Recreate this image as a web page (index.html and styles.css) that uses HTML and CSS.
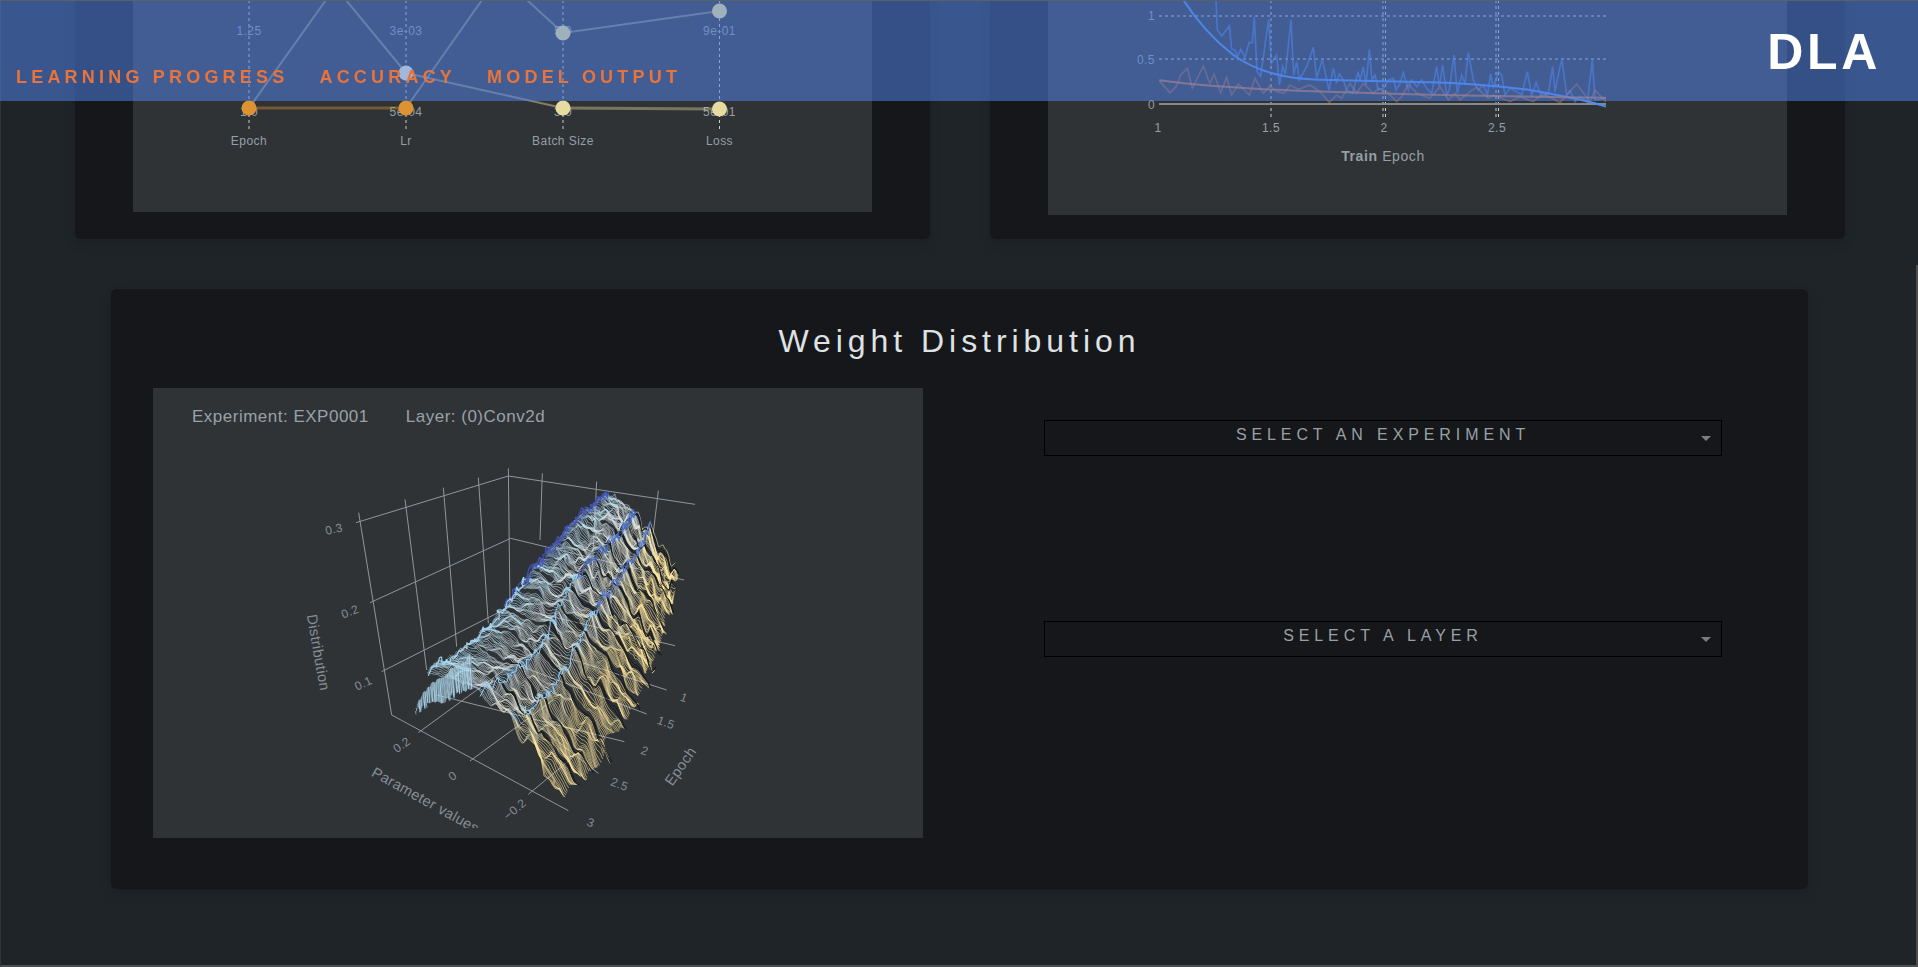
FILE: index.html
```html
<!DOCTYPE html>
<html lang="en">
<head>
<meta charset="utf-8">
<title>DLA</title>
<link rel="stylesheet" href="styles.css">
</head>
<body>
<header class="nav">
  <nav class="nav-links">
    <a class="nav-link" href="#progress">LEARNING PROGRESS</a>
    <a class="nav-link" href="#accuracy">ACCURACY</a>
    <a class="nav-link" href="#output">MODEL OUTPUT</a>
  </nav>
  <div class="brand">DLA</div>
</header>
<div class="scroll-thumb"></div>
<main class="page">
  <section class="top-row">
    <div class="card card-top">
      <div class="plot plot-parallel">
        <svg class="chart" viewBox="133 0 739 212" width="739" height="212">
          <g class="axis-dash">
            <line x1="249" y1="0" x2="249" y2="129"/>
            <line x1="406" y1="0" x2="406" y2="129"/>
            <line x1="563" y1="0" x2="563" y2="129"/>
            <line x1="719.5" y1="0" x2="719.5" y2="129"/>
          </g>
          <g class="tick" text-anchor="middle">
            <text x="249" y="35">1.25</text>
            <text x="406" y="35">3e-03</text>
            <text x="563" y="35">5.0</text>
            <text x="719.5" y="35">9e-01</text>
            <text x="249" y="116">1.0</text>
            <text x="406" y="116">5e-04</text>
            <text x="563" y="116">3.0</text>
            <text x="719.5" y="116">5e-01</text>
          </g>
          <g class="tick" text-anchor="middle">
            <text x="249" y="145">Epoch</text>
            <text x="406" y="145">Lr</text>
            <text x="563" y="145">Batch Size</text>
            <text x="719.5" y="145">Loss</text>
          </g>
          <g class="trace-grey">
            <polyline points="249,108 326,0"/>
            <polyline points="346,0 406,73 563,108"/>
            <polyline points="406,108 482,0"/>
            <polyline points="527,0 563,33 719.5,11"/>
          </g>
          <polyline class="trace-orange" points="249,108 406,108"/>
          <polyline class="trace-olive" points="563,108 719.5,109"/>
          <circle class="pt-orange" cx="249" cy="108" r="7.5"/>
          <circle class="pt-orange" cx="406" cy="108" r="7.5"/>
          <circle class="pt-yellow" cx="563" cy="108" r="7.5"/>
          <circle class="pt-yellow" cx="719.5" cy="109" r="7.5"/>
          <circle class="pt-blue" cx="406" cy="73" r="7.5"/>
          <circle class="pt-pale" cx="563" cy="33" r="7.5"/>
          <circle class="pt-pale" cx="719.5" cy="11" r="7.5"/>
        </svg>
      </div>
    </div>
    <div class="card card-top">
      <div class="plot plot-loss">
        <svg class="chart" viewBox="1048 0 739 215" width="739" height="215">
          <g class="grid-dash">
            <line x1="1159" y1="16" x2="1606" y2="16"/>
            <line x1="1159" y1="59" x2="1606" y2="59"/>
            <line x1="1271" y1="0" x2="1271" y2="118"/>
            <line x1="1383" y1="0" x2="1383" y2="118"/>
            <line x1="1385.5" y1="0" x2="1385.5" y2="118"/>
            <line x1="1496" y1="0" x2="1496" y2="118"/>
            <line x1="1498.5" y1="0" x2="1498.5" y2="118"/>
          </g>
          <line class="zero-line" x1="1159" y1="104" x2="1606" y2="104"/>
          <g class="tick" text-anchor="end">
            <text x="1155" y="20">1</text>
            <text x="1155" y="64">0.5</text>
            <text x="1155" y="109">0</text>
          </g>
          <g class="tick" text-anchor="middle">
            <text x="1158" y="132">1</text>
            <text x="1271" y="132">1.5</text>
            <text x="1384" y="132">2</text>
            <text x="1497" y="132">2.5</text>
          </g>
          <text class="axis-title" x="1383" y="161" text-anchor="middle"><tspan class="axis-title-strong">Train</tspan> Epoch</text>
          <g transform="translate(1130 0) scale(.33333)">
            <polyline class="noisy-blue" points="258,0 262,90 275,108 298,78 305,148 315,150 322,170 332,148 345,172 357,128 367,128 373,50 381,215 392,228 416,58 424,190 440,165 448,255 458,200 466,222 483,60 491,225 500,185 508,240 530,200 550,142 560,235 577,178 597,270 610,205 620,250 628,222 640,240 650,270 668,280 684,215 690,240 700,202 708,255 718,148 726,240 735,225 745,270 760,265 775,240 790,235 798,270 810,250 820,218 835,270 845,240 860,260 875,240 890,265 905,280 920,200 928,260 938,195 950,285 958,270 972,165 982,280 995,225 1005,250 1015,158 1030,240 1045,270 1060,255 1072,285 1082,222 1090,265 1105,215 1115,225 1125,285 1140,265 1160,275 1175,285 1192,215 1205,285 1218,248 1235,290 1255,280 1268,200 1275,275 1290,200 1296,180 1310,285 1320,272 1335,305 1350,290 1372,305 1387,180 1395,300 1428,295"/>
            <polyline class="noisy-orange" points="88,242 120,278 140,258 152,225 172,205 187,265 220,198 240,252 252,222 272,278 290,232 305,285 325,252 358,285 375,235 400,280 420,258 440,275 462,280 480,255 505,268 540,255 570,275 598,307 620,285 635,295 660,250 680,280 700,250 730,280 745,265 770,275 800,305 815,290 835,252 860,280 900,295 930,260 955,300 975,280 990,300 1020,275 1040,262 1075,295 1090,285 1140,305 1170,290 1210,305 1240,280 1290,308 1340,252 1380,305 1395,270 1428,305"/>
            <path class="smooth-blue" d="M160 0C200 62 250 118 310 165C370 208 440 232 540 238C620 242 760 243 900 247C1000 249 1100 258 1200 270C1300 288 1370 300 1428 320"/>
            <path class="smooth-orange" d="M88 241C200 256 330 266 500 272C760 281 1000 288 1428 293"/>
          </g>
        </svg>
      </div>
    </div>
  </section>

  <section class="card card-main">
    <h1 class="title">Weight Distribution</h1>
    <div class="main-body">
      <div class="plot plot-surface">
        <div class="surface-info">
          <span>Experiment: EXP0001</span>
          <span>Layer: (0)Conv2d</span>
        </div>
        <svg class="surface-svg" viewBox="153 388 770 440" width="770" height="440">
          <g transform="translate(280 450) scale(.33333)">
            <g class="frame">
              <path d="M236 188L335 795L865 1082"/>
              <path d="M228 218L685 78L1245 163"/>
              <path d="M685 55L690 470"/>
              <path d="M375 148L440 660M490 113L530 590M595 83L625 520"/>
              <path d="M270 458L692 265L1212 390"/>
              <path d="M305 665L690 470L1185 587"/>
              <path d="M787 70L780 270M950 95L935 390M1135 122L1115 290"/>
              <path d="M415 848L700 640M570 933L820 750M745 1033L905 900"/>
              <path d="M470 735L1033 875M600 690L955 970M700 640L1100 792M820 610L1160 720"/>
            </g>
            <g id="surface"></g>
            <g class="surface-tick" text-anchor="middle">
              <text x="162" y="250" transform="rotate(-12 162 238)">0.3</text>
              <text x="210" y="497" transform="rotate(-22 210 485)">0.2</text>
              <text x="250" y="712" transform="rotate(-25 250 700)">0.1</text>
              <text x="365" y="897" transform="rotate(-35 365 885)">0.2</text>
              <text x="518" y="990" transform="rotate(-35 518 978)">0</text>
              <text x="705" y="1090" transform="rotate(-40 705 1078)">−0.2</text>
              <text x="1212" y="755" transform="rotate(20 1212 743)">1</text>
              <text x="1158" y="830" transform="rotate(20 1158 818)">1.5</text>
              <text x="1094" y="915" transform="rotate(20 1094 903)">2</text>
              <text x="1018" y="1015" transform="rotate(20 1018 1003)">2.5</text>
              <text x="932" y="1130" transform="rotate(20 932 1118)">3</text>
            </g>
            <g class="surface-name" text-anchor="middle">
              <text x="112" y="620" transform="rotate(80 112 608)">Distribution</text>
              <text x="1204" y="962" transform="rotate(-55 1204 950)">Epoch</text>
              <text x="278" y="978" text-anchor="start" transform="rotate(29 278 965)">Parameter values</text>
            </g>
          </g>
        </svg>
      </div>
      <div class="controls">
        <div class="select"><span class="select-label">SELECT AN EXPERIMENT</span><span class="caret"></span></div>
        <div class="select select-second"><span class="select-label">SELECT A LAYER</span><span class="caret"></span></div>
      </div>
    </div>
  </section>
</main>
<script src="script.js"></script>
</body>
</html>
```

FILE: styles.css
```css
* { box-sizing: border-box; }
html, body { margin: 0; padding: 0; }
body {
  height: 967px;
  overflow: hidden;
  background: #1e2428;
  color: #9aa1a7;
  font-family: "Liberation Sans", Arial, sans-serif;
  border-left: 1px solid #2f3538;
  border-bottom: 2px solid #4a4f52;
}
.nav {
  position: fixed;
  top: 0;
  left: 0;
  right: 0;
  height: 101px;
  z-index: 10;
  display: flex;
  justify-content: space-between;
  background: rgba(80, 128, 226, .55);
  border-top: 1px solid #5a6068;
}
.nav-links {
  display: flex;
  align-items: flex-end;
  gap: 31px;
  padding: 0 0 12px 16px;
}
.nav-link {
  color: #e8743b;
  font-size: 18px;
  font-weight: 700;
  line-height: 24px;
  letter-spacing: 4.2px;
  text-decoration: none;
  white-space: nowrap;
}
.brand {
  color: #fff;
  font-size: 50px;
  font-weight: 700;
  line-height: 60px;
  letter-spacing: 3.7px;
  padding: 21px 37px 0 0;
}
.scroll-thumb {
  position: fixed;
  top: 265px;
  right: 0;
  bottom: 0;
  width: 2px;
  background: #4d4d4d;
  z-index: 11;
}
.page { display: block; }
.top-row {
  display: flex;
  gap: 60px;
  padding-left: 74px;
}
.card {
  background: #15171a;
  border-radius: 6px;
  box-shadow: 0 4px 12px rgba(0, 0, 0, .14);
}
.card-top {
  width: 855px;
  height: 239px;
  padding: 0 58px;
  overflow: hidden;
  border-radius: 0 0 6px 6px;
}
.plot { background: #2f3336; }
.plot-parallel { height: 212px; }
.plot-loss { height: 215px; }
.chart { display: block; }
.axis-dash line { stroke: #c9cfd4; stroke-width: 1; stroke-dasharray: 3 3; }
.grid-dash line { stroke: #c9cfd4; stroke-width: 1; stroke-dasharray: 3 3; }
.tick text { font: 12px "Liberation Sans", Arial, sans-serif; letter-spacing: .45px; fill: #979fa6; }
.axis-title { font: 14px "Liberation Sans", Arial, sans-serif; letter-spacing: .6px; fill: #979fa6; }
.axis-title-strong { font-weight: 700; }
.trace-grey polyline { fill: none; stroke: #ecdcb0; stroke-width: 2; opacity: .45; }
.trace-orange { fill: none; stroke: #e0932e; stroke-width: 3; opacity: .4; }
.trace-olive { fill: none; stroke: #e6dca0; stroke-width: 3; opacity: .4; }
.pt-orange { fill: #dd9430; }
.pt-yellow { fill: #e6dca0; }
.pt-blue { fill: #fffcd2; }
.pt-pale { fill: #fff08c; }
.zero-line { stroke: #85898d; stroke-width: 2; }
.noisy-blue { fill: none; stroke: #4f8df5; stroke-width: 5; opacity: .6; }
.noisy-orange { fill: none; stroke: #f0803c; stroke-width: 5; opacity: .45; }
.smooth-blue { fill: none; stroke: #4f8df5; stroke-width: 6; }
.smooth-orange { fill: none; stroke: #f0803c; stroke-width: 6; opacity: .75; }

.card-main {
  width: 1697px;
  height: 600px;
  margin: 50px 0 0 110px;
  padding: 0 42px;
}
.title {
  margin: 0;
  height: 99px;
  padding-top: 34px;
  text-align: center;
  color: #dfe2e5;
  font-size: 32px;
  font-weight: 400;
  line-height: 37px;
  letter-spacing: 4.95px;
}
.main-body { display: flex; }
.plot-surface {
  width: 770px;
  height: 450px;
  flex: none;
  overflow: hidden;
}
.surface-info {
  display: flex;
  gap: 37px;
  height: 0;
  padding-left: 39px;
  font-size: 17px;
  line-height: 20px;
  letter-spacing: .5px;
  color: #9aa1a7;
  white-space: nowrap;
  transform: translateY(19px);
}
.surface-svg { display: block; }
.frame path { fill: none; stroke: #8f979e; stroke-width: 3; }
.surface-tick text { font: 36px "Liberation Sans", Arial, sans-serif; letter-spacing: 1px; fill: #858d94; }
.surface-name text { font: 44px "Liberation Sans", Arial, sans-serif; letter-spacing: 1px; fill: #858d94; }

.controls {
  width: 678px;
  margin-left: 121px;
  padding-top: 32px;
}
.select {
  position: relative;
  height: 36px;
  border: 1px solid #000;
  text-align: center;
  line-height: 28px;
  font-size: 16px;
  letter-spacing: 4.9px;
  color: #9aa0a6;
}
.select-second { margin-top: 165px; }
.caret {
  position: absolute;
  top: 15px;
  right: 10px;
  border-left: 5px solid transparent;
  border-right: 5px solid transparent;
  border-top: 5px solid #7a7d80;
}
```

FILE: script.js
```js
(function () {
  var seed = 1234567;
  function rnd() {
    seed = (seed + 0x6D2B79F5) | 0;
    var t = Math.imul(seed ^ (seed >>> 15), 1 | seed);
    t = (t + Math.imul(t ^ (t >>> 7), 61 | t)) ^ t;
    return ((t ^ (t >>> 14)) >>> 0) / 4294967296;
  }
  var table = [];
  for (var n = 0; n < 4096; n++) table.push(rnd());
  function lat(i, j) { return table[((i * 73 + j * 179) % 4096 + 4096) % 4096]; }
  function smooth(t) { return t * t * (3 - 2 * t); }
  function noise(x, y) {
    var i = Math.floor(x), j = Math.floor(y);
    var fx = smooth(x - i), fy = smooth(y - j);
    var a = lat(i, j), b = lat(i + 1, j), c = lat(i, j + 1), d = lat(i + 1, j + 1);
    return (a + (b - a) * fx) + ((c + (d - c) * fx) - (a + (b - a) * fx)) * fy - 0.5;
  }
  function sample(pts, u) {
    var p = Math.min(u, 0.9999) * (pts.length - 1);
    var k = Math.floor(p), f = p - k;
    return [pts[k][0] + (pts[k + 1][0] - pts[k][0]) * f, pts[k][1] + (pts[k + 1][1] - pts[k][1]) * f];
  }
  var START = [[440,665],[530,610],[620,530],[690,445],[750,360],[810,290],[870,215],[930,170],[980,125]];
  var END = [[865,1060],[950,975],[1050,835],[1120,710],[1150,610],[1185,480],[1195,390]];
  var buckets = {};
  function put(color, width, x1, y1, x2, y2) {
    var key = color + '|' + width;
    (buckets[key] = buckets[key] || []).push('M' + x1.toFixed(1) + ' ' + y1.toFixed(1) + 'L' + x2.toFixed(1) + ' ' + y2.toFixed(1));
  }
  function gauss(s, c, w) { var d = (s - c) / w; return Math.exp(-d * d); }
  function ridge2(u) { return 0.38 + 0.04 * Math.sin(u * 9); }
  function ridge3(u) { return 0.58 + 0.03 * Math.sin(u * 7 + 1); }
  function pointAt(u, s, frac) {
    var a = sample(START, u), b = sample(END, u);
    var x = a[0] + (b[0] - a[0]) * s;
    var y = a[1] + (b[1] - a[1]) * s;
    var bulge = Math.sin(Math.PI * Math.pow(s, 0.85)) * (88 - 50 * u);
    y -= bulge;
    y -= 16 * gauss(s, ridge2(u), 0.035) + 18 * gauss(s, ridge3(u), 0.03);
    var nAmp = 12 + 18 * s;
    y += noise(u * 45, s * 18) * nAmp * 2 + noise(u * 150, s * 46) * 9;
    x += noise(u * 90, s * 30 + 5) * 7;
    y += (frac - 0.5) * 12 * s;
    return [x, y];
  }
  function colorFor(u, s) {
    var top = u > 0.35 ? 0.03 : 0.012;
    if (s < top) return '#4658b8';
    if (Math.abs(s - ridge2(u)) < 0.012) return u > 0.55 ? '#7ea6e0' : '#9ccff0';
    if (Math.abs(s - ridge3(u)) < 0.011) return u > 0.45 ? '#6f9fe0' : '#a4d2f0';
    if (s < 0.1) return u > 0.55 ? '#8fb0d8' : '#b4e0f4';
    if (s < 0.22) return '#c4e4f0';
    if (s < 0.46) return '#d6e2e6';
    if (s < 0.62) return '#e4e6d6';
    if (s < 0.74) return '#f0e5b4';
    return '#ffe7a0';
  }
  var ROWS = 270, GROUPS = 12;
  for (var i = 0; i <= ROWS; i++) {
    var raw = i / ROWS;
    var gp = raw * GROUPS;
    var g = Math.floor(gp), frac = gp - g;
    var dark = frac > 0.9 && i < ROWS;
    var endS = 1 - 0.05 * (1 - frac) - 0.02 * lat(g, 3);
    var px = null, py = null, STEPS = 54;
    for (var k = 0; k <= STEPS; k++) {
      var s = k / STEPS * endS;
      var p = pointAt(raw, s, frac);
      if (px !== null) {
        if (!dark) put(colorFor(raw, s), 1.7, px, py, p[0], p[1]);
        else if (s > 0.35) put('#14171a', 2.6, px, py, p[0], p[1]);
      }
      px = p[0]; py = p[1];
    }
  }
  function ridgeLine(fn, color, width, from, to) {
    var px = null, py = null;
    for (var m = 0; m <= 120; m++) {
      var u = from + (to - from) * m / 120;
      var p = pointAt(u, fn(u), 0.5);
      var jx = noise(m * 0.7, 9) * 12, jy = noise(m * 0.9, 4) * 22;
      if (px !== null) put(color, width, px, py, p[0] + jx, p[1] + jy);
      px = p[0] + jx; py = p[1] + jy;
    }
  }
  ridgeLine(function () { return 0; }, '#3f53b4', 3.5, 0.35, 1);
  ridgeLine(function () { return 0.018; }, '#a4d4f2', 3.5, 0, 0.45);
  ridgeLine(function () { return 0.03; }, '#4658b8', 3, 0.45, 1);
  ridgeLine(ridge2, '#9ccff0', 3, 0, 0.55);
  ridgeLine(ridge2, '#4c6ac8', 3, 0.55, 1);
  ridgeLine(ridge3, '#9ccff0', 3, 0.05, 0.5);
  ridgeLine(ridge3, '#4f70cc', 3, 0.5, 1);
  // left tip: dense pale wedge
  for (var v = 0; v <= 90; v++) {
    var t = v / 90;
    var ax = 405 + 165 * t, ay = 783 - 125 * t - 40 * Math.min(t * 7, 1) + noise(t * 30, 2) * 16;
    var bx = 405 + 170 * t + 6 * lat(v, 1), by = 783 - 70 * t + noise(t * 24, 7) * 22;
    put(v % 3 ? '#b4e0f4' : '#7f97ac', 2, ax, ay, bx, by);
  }
  var host = document.getElementById('surface');
  Object.keys(buckets).forEach(function (key) {
    var parts = key.split('|');
    var path = document.createElementNS('http://www.w3.org/2000/svg', 'path');
    path.setAttribute('d', buckets[key].join(''));
    path.setAttribute('fill', 'none');
    path.setAttribute('stroke', parts[0]);
    path.setAttribute('stroke-width', parts[1]);
    host.appendChild(path);
  });
})();
```
